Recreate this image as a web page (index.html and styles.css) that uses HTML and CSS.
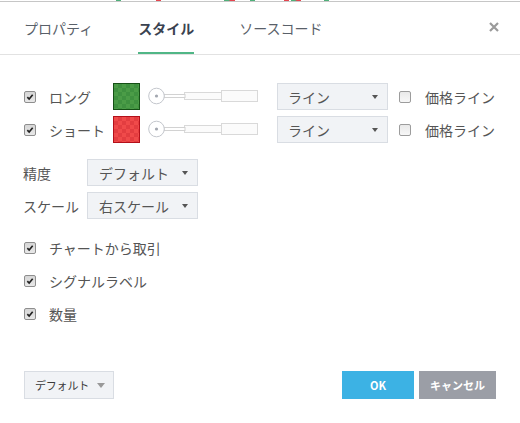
FILE: index.html
```html
<!DOCTYPE html>
<html lang="ja">
<head>
<meta charset="utf-8">
<link rel="stylesheet" href="styles.css">
</head>
<body>
<div class="strip"></div>
<header class="tabs">
  <div class="tab">プロパティ</div>
  <div class="tab active">スタイル</div>
  <div class="tab">ソースコード</div>
  <div class="close">
    <svg width="12" height="12" viewBox="0 0 12 12"><path d="M2 2 L10 10 M10 2 L2 10" stroke="#9a9a9a" stroke-width="2.2"/></svg>
  </div>
</header>
<main class="content">
  <div class="series">
    <div class="srow">
      <span class="cb checked"><svg width="12" height="12" viewBox="0 0 12 12"><path d="M2.8 6.2 L5 8.4 L9.2 3.4" stroke="#222" stroke-width="2" fill="none"/></svg></span>
      <span class="slabel">ロング</span>
      <span class="swatch green"></span>
      <svg class="slider" width="110" height="27" viewBox="0 0 110 27">
        <rect x="73.5" y="7.5" width="36" height="11" fill="#fbfbfb" stroke="#d9d9d9"/>
        <rect x="36.5" y="9.5" width="37" height="7" fill="#fbfbfb" stroke="#d9d9d9"/>
        <rect x="16" y="11.5" width="21" height="3" fill="#fff" stroke="#d2d2d2"/>
        <circle cx="8.5" cy="13" r="7.8" fill="#fff" stroke="#c4c7cd"/>
        <circle cx="8.5" cy="13" r="1.6" fill="#a3a7b0"/>
      </svg>
      <div class="select wide"><span>ライン</span><i class="caret"></i></div>
      <span class="cb"></span>
      <span class="plabel">価格ライン</span>
    </div>
    <div class="srow">
      <span class="cb checked"><svg width="12" height="12" viewBox="0 0 12 12"><path d="M2.8 6.2 L5 8.4 L9.2 3.4" stroke="#222" stroke-width="2" fill="none"/></svg></span>
      <span class="slabel">ショート</span>
      <span class="swatch red"></span>
      <svg class="slider" width="110" height="27" viewBox="0 0 110 27">
        <rect x="73.5" y="7.5" width="36" height="11" fill="#fbfbfb" stroke="#d9d9d9"/>
        <rect x="36.5" y="9.5" width="37" height="7" fill="#fbfbfb" stroke="#d9d9d9"/>
        <rect x="16" y="11.5" width="21" height="3" fill="#fff" stroke="#d2d2d2"/>
        <circle cx="8.5" cy="13" r="7.8" fill="#fff" stroke="#c4c7cd"/>
        <circle cx="8.5" cy="13" r="1.6" fill="#a3a7b0"/>
      </svg>
      <div class="select wide"><span>ライン</span><i class="caret"></i></div>
      <span class="cb"></span>
      <span class="plabel">価格ライン</span>
    </div>
  </div>
  <div class="fields">
    <div class="frow">
      <span class="flabel">精度</span>
      <div class="select"><span>デフォルト</span><i class="caret"></i></div>
    </div>
    <div class="frow">
      <span class="flabel">スケール</span>
      <div class="select"><span>右スケール</span><i class="caret"></i></div>
    </div>
  </div>
  <div class="checks">
    <div class="crow">
      <span class="cb checked"><svg width="12" height="12" viewBox="0 0 12 12"><path d="M2.8 6.2 L5 8.4 L9.2 3.4" stroke="#222" stroke-width="2" fill="none"/></svg></span>
      <span class="clabel">チャートから取引</span>
    </div>
    <div class="crow">
      <span class="cb checked"><svg width="12" height="12" viewBox="0 0 12 12"><path d="M2.8 6.2 L5 8.4 L9.2 3.4" stroke="#222" stroke-width="2" fill="none"/></svg></span>
      <span class="clabel">シグナルラベル</span>
    </div>
    <div class="crow">
      <span class="cb checked"><svg width="12" height="12" viewBox="0 0 12 12"><path d="M2.8 6.2 L5 8.4 L9.2 3.4" stroke="#222" stroke-width="2" fill="none"/></svg></span>
      <span class="clabel">数量</span>
    </div>
  </div>
</main>
<footer class="footer">
  <div class="defbtn"><span>デフォルト</span><i class="caret light"></i></div>
  <div class="actions">
    <button class="btn ok">OK</button>
    <button class="btn cancel">キャンセル</button>
  </div>
</footer>
</body>
</html>
```

FILE: styles.css
```css
* { box-sizing: border-box; }
html, body { margin: 0; padding: 0; }
body {
  width: 520px;
  height: 423px;
  background: #fff;
  font-family: "Noto Sans CJK JP", "Noto Sans", sans-serif;
  font-size: 14px;
  color: #555;
  display: flex;
  flex-direction: column;
  overflow: hidden;
}
.strip {
  height: 2px;
  flex: none;
  background:
    linear-gradient(to right,
      transparent 116px, #4fb07a 116px, #4fb07a 121px, transparent 121px,
      transparent 156px, #e5454f 156px, #e5454f 161px, transparent 161px,
      transparent 224px, #4fb07a 224px, #4fb07a 229px, #e5454f 230px, #e5454f 235px, transparent 235px,
      transparent 250px, #4fb07a 250px, #4fb07a 255px, transparent 255px,
      transparent 284px, #e5454f 284px, #e5454f 289px, transparent 289px,
      transparent 291px, #4fb07a 291px, #4fb07a 295px, #e5454f 297px, #e5454f 301px, transparent 301px,
      transparent 324px, #4fb07a 324px, #4fb07a 329px, transparent 329px) top / 100% 1px no-repeat,
    linear-gradient(#c6c6c6, #c6c6c6) bottom / 100% 1px no-repeat;
}
.tabs {
  flex: none;
  height: 53px;
  border-bottom: 1px solid #e2e2e2;
  display: flex;
  align-items: stretch;
  padding-left: 24px;
  padding-right: 20px;
}
.tab {
  display: flex;
  align-items: center;
  font-size: 14px;
  color: #596069;
  margin-right: 45px;
  padding-bottom: 1px;
}
.tab.active {
  color: #3a4250;
  font-weight: bold;
  box-shadow: inset 0 -2px 0 #50b686;
}
.close {
  margin-left: auto;
  display: flex;
  align-items: center;
  padding-bottom: 3px;
}
.content {
  padding: 28px 24px 0 24px;
}
.series, .fields {
  display: flex;
  flex-direction: column;
  gap: 6px;
}
.srow, .frow {
  display: flex;
  align-items: center;
  height: 27px;
}
.cb {
  width: 12px;
  height: 12px;
  flex: none;
  border: 1px solid #9c9c9c;
  border-radius: 2px;
  background: linear-gradient(#e9e9e9, #f7f7f7);
  display: inline-flex;
  align-items: center;
  justify-content: center;
}
.cb.checked {
  background: linear-gradient(#d6d6d6, #e8e8e8);
  border-color: #8e8e8e;
}
.cb svg { display: block; }
.slabel {
  width: 64px;
  margin-left: 13px;
  white-space: nowrap;
}
.swatch {
  width: 27px;
  height: 27px;
  flex: none;
  border: 1px solid;
  background-size: 8px 8px;
  background-position: 0 0, 4px 4px;
}
.swatch.green {
  border-color: #165016;
  background-color: #4b9c47;
  background-image:
    linear-gradient(45deg, #3f9140 25%, transparent 25%, transparent 75%, #3f9140 75%),
    linear-gradient(45deg, #3f9140 25%, transparent 25%, transparent 75%, #3f9140 75%);
}
.swatch.red {
  border-color: #b3101a;
  background-color: #f04a4a;
  background-image:
    linear-gradient(45deg, #e33d40 25%, transparent 25%, transparent 75%, #e33d40 75%),
    linear-gradient(45deg, #e33d40 25%, transparent 25%, transparent 75%, #e33d40 75%);
}
.slider {
  display: block;
  margin-left: 8px;
  flex: none;
}
.select {
  width: 111px;
  height: 27px;
  flex: none;
  background: #f1f3f6;
  border: 1px solid #d9dde3;
  display: flex;
  align-items: center;
  justify-content: space-between;
  padding: 0 9px 0 10px;
  color: #555;
  font-size: 14px;
}
.select.wide { margin-left: 19px; }
.caret {
  width: 0;
  height: 0;
  border-left: 3.5px solid transparent;
  border-right: 3.5px solid transparent;
  border-top: 4px solid #555;
}
.caret.light {
  border-left-width: 4px;
  border-right-width: 4px;
  border-top: 5px solid #999;
}
.srow .select + .cb { margin-left: 11px; }
.plabel {
  margin-left: 14px;
  white-space: nowrap;
}
.fields { margin-top: 16px; }
.flabel {
  width: 64px;
  margin-left: -1px;
  white-space: nowrap;
}
.frow .select { padding-left: 11px; }
.checks {
  margin-top: 19px;
  display: flex;
  flex-direction: column;
  gap: 13px;
}
.crow {
  display: flex;
  align-items: center;
  height: 20px;
}
.clabel { margin-left: 13px; }
.footer {
  margin-top: auto;
  padding: 0 24px 24px 24px;
  display: flex;
  justify-content: space-between;
  align-items: center;
}
.defbtn {
  width: 90px;
  height: 28px;
  background: #f1f3f6;
  border: 1px solid #d9dde3;
  display: flex;
  align-items: center;
  justify-content: space-between;
  padding: 0 8px 0 10px;
  font-size: 11px;
  color: #3a3a3a;
  letter-spacing: -0.2px;
}
.actions {
  display: flex;
  gap: 5px;
}
.btn {
  height: 28px;
  border: none;
  color: #fff;
  font-family: inherit;
  font-weight: bold;
  font-size: 11px;
  padding: 0;
}
.btn.ok {
  width: 72px;
  background: #3cb2e4;
}
.btn.cancel {
  width: 77px;
  background: #9b9ea6;
}
```
